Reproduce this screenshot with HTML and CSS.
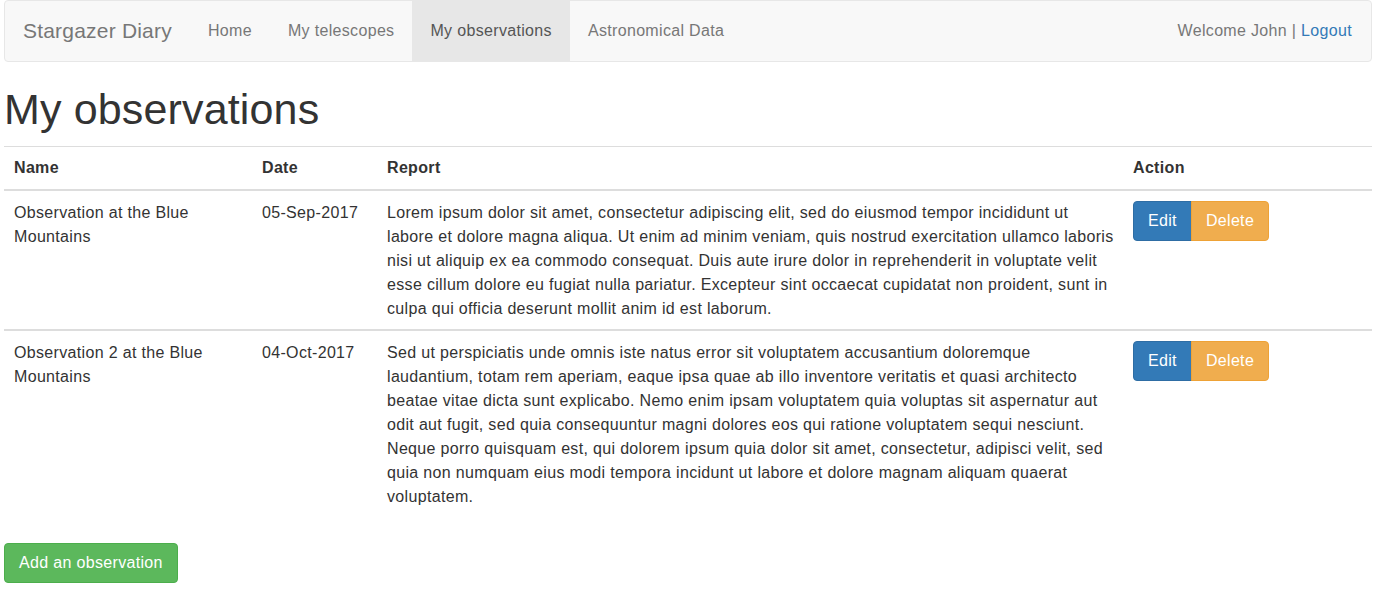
FILE: index.html
```html
<!DOCTYPE html>
<html lang="en">
<head>
<meta charset="utf-8">
<title>Stargazer Diary - My observations</title>
<link rel="stylesheet" href="styles.css">
</head>
<body>
<div class="page">
  <nav class="navbar">
    <a class="brand" href="#">Stargazer Diary</a>
    <ul class="nav">
      <li><a href="#">Home</a></li>
      <li><a href="#">My telescopes</a></li>
      <li class="active"><a href="#">My observations</a></li>
      <li><a href="#">Astronomical Data</a></li>
    </ul>
    <div class="navbar-right">Welcome John | <a href="#" class="link">Logout</a></div>
  </nav>

  <h1 class="title">My observations</h1>

  <table class="table">
    <colgroup>
      <col class="col-name">
      <col class="col-date">
      <col class="col-report">
      <col class="col-action">
    </colgroup>
    <thead>
      <tr>
        <th>Name</th>
        <th>Date</th>
        <th>Report</th>
        <th>Action</th>
      </tr>
    </thead>
    <tbody>
      <tr>
        <td>Observation at the Blue Mountains</td>
        <td>05-Sep-2017</td>
        <td class="report">Lorem ipsum dolor sit amet, consectetur adipiscing elit, sed do eiusmod tempor incididunt ut labore et dolore magna aliqua. Ut enim ad minim veniam, quis nostrud exercitation ullamco laboris nisi ut aliquip ex ea commodo consequat. Duis aute irure dolor in reprehenderit in voluptate velit esse cillum dolore eu fugiat nulla pariatur. Excepteur sint occaecat cupidatat non proident, sunt in culpa qui officia deserunt mollit anim id est laborum.</td>
        <td>
          <div class="btn-group">
            <a href="#" class="btn btn-primary">Edit</a><a href="#" class="btn btn-warning">Delete</a>
          </div>
        </td>
      </tr>
      <tr>
        <td>Observation 2 at the Blue Mountains</td>
        <td>04-Oct-2017</td>
        <td class="report">Sed ut perspiciatis unde omnis iste natus error sit voluptatem accusantium doloremque laudantium, totam rem aperiam, eaque ipsa quae ab illo inventore veritatis et quasi architecto beatae vitae dicta sunt explicabo. Nemo enim ipsam voluptatem quia voluptas sit aspernatur aut odit aut fugit, sed quia consequuntur magni dolores eos qui ratione voluptatem sequi nesciunt. Neque porro quisquam est, qui dolorem ipsum quia dolor sit amet, consectetur, adipisci velit, sed quia non numquam eius modi tempora incidunt ut labore et dolore magnam aliquam quaerat voluptatem.</td>
        <td>
          <div class="btn-group">
            <a href="#" class="btn btn-primary">Edit</a><a href="#" class="btn btn-warning">Delete</a>
          </div>
        </td>
      </tr>
    </tbody>
  </table>

  <a href="#" class="btn btn-success btn-single">Add an observation</a>
</div>
</body>
</html>
```

FILE: styles.css
```css
* {
  box-sizing: border-box;
}

html, body {
  margin: 0;
  padding: 0;
  background: #fff;
}

body {
  font-family: "Liberation Sans", Arial, Helvetica, sans-serif;
  font-size: 16px;
  line-height: 24px;
  letter-spacing: 0.33px;
  color: #333;
}

a {
  text-decoration: none;
}

.page {
  padding: 0 5px 0 4px;
}

/* Navbar */
.navbar {
  display: flex;
  align-items: center;
  height: 62px;
  background: #f8f8f8;
  border: 1px solid #e7e7e7;
  border-radius: 4px;
}

.brand {
  color: #777;
  font-size: 21px;
  line-height: 24px;
  letter-spacing: 0.2px;
  padding: 0 18px 0 18px;
}

.nav {
  display: flex;
  list-style: none;
  margin: 0;
  padding: 0;
  height: 60px;
}

.nav li a {
  display: block;
  padding: 20px 18px;
  line-height: 20px;
  color: #777;
}

.nav li.active a {
  background: #e7e7e7;
  color: #555;
}

.navbar-right {
  margin-left: auto;
  padding-right: 19px;
  color: #777;
  line-height: 20px;
}

.link {
  color: #337ab7;
}

/* Heading */
.title {
  font-size: 43px;
  font-weight: 500;
  line-height: 47px;
  letter-spacing: 0.15px;
  margin: 24px 0 13px 0;
  color: #333;
}

/* Table */
.table {
  width: 100%;
  border-collapse: collapse;
  table-layout: fixed;
  border-top: 1px solid #ddd;
  margin-bottom: 26px;
}

.col-name { width: 250px; }
.col-date { width: 125px; }
.col-report { width: 746px; }
.col-action { width: auto; }

.table th {
  text-align: left;
  font-weight: bold;
  padding: 9px 8px;
  border-bottom: 2px solid #ddd;
  vertical-align: bottom;
}

.table td {
  padding: 10px 8px 8px 8px;
  vertical-align: top;
}

.table th:first-child,
.table td:first-child {
  padding-left: 10px;
}

.table td.report {
  padding-right: 10px;
}

.table tbody tr + tr td {
  border-top: 2px solid #ddd;
}

/* Buttons */
.btn-group {
  display: inline-flex;
}

.btn {
  display: inline-block;
  padding: 7px 14px;
  font-size: 16px;
  line-height: 24px;
  color: #fff;
  border: 1px solid transparent;
  white-space: nowrap;
}

.btn-primary {
  background: #337ab7;
  border-color: #2e6da4;
  border-radius: 4px 0 0 4px;
}

.btn-warning {
  background: #f0ad4e;
  border-color: #eea236;
  border-radius: 0 4px 4px 0;
  margin-left: -1px;
}

.btn-success {
  background: #5cb85c;
  border-color: #4cae4c;
}

.btn-single {
  border-radius: 4px;
}
```
